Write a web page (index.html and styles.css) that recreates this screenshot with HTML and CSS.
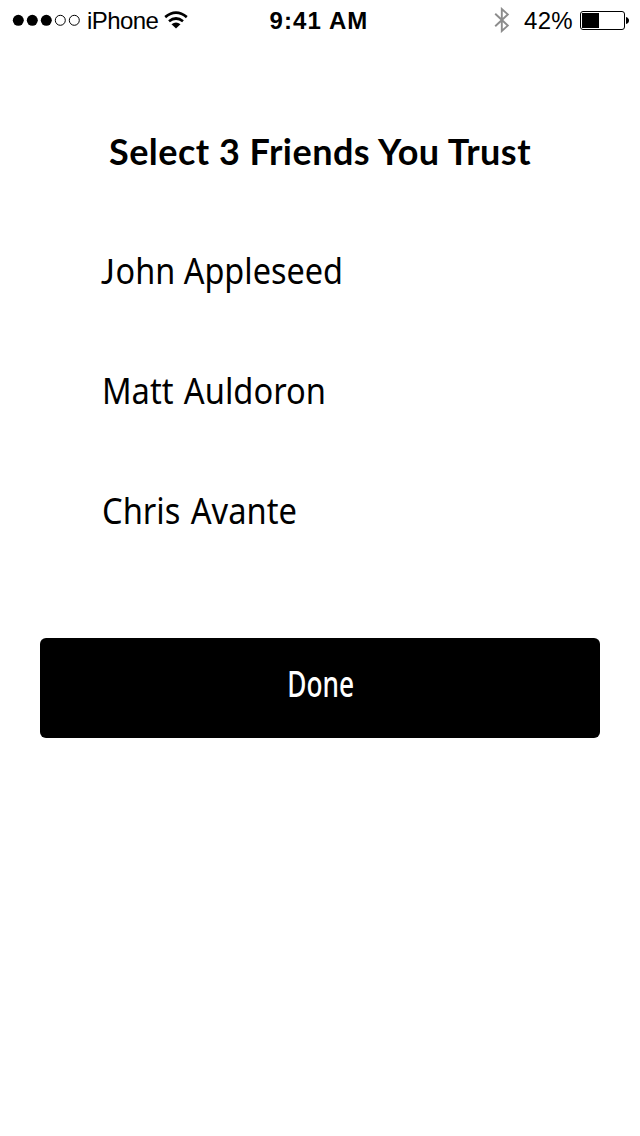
FILE: index.html
```html
<!DOCTYPE html>
<html lang="en">
<head>
<meta charset="utf-8">
<title>Select Friends</title>
<link rel="stylesheet" href="styles.css">
</head>
<body>
<header class="status">
  <div class="status-left">
    <svg class="signal" width="68" height="12" viewBox="0 0 68 12"><circle cx="6.3" cy="6.3" r="5.5"/><circle cx="20.3" cy="6.3" r="5.5"/><circle cx="34.3" cy="6.3" r="5.5"/><g fill="none" stroke="#000"><circle cx="48.3" cy="6.3" r="5"/><circle cx="62.3" cy="6.3" r="5"/></g></svg>
    <span class="carrier">iPhone</span>
    <svg class="wifi" width="24" height="18" viewBox="0 0 24 18"><g fill="none" stroke="#000" stroke-width="2.7"><path d="M1.2 6.1Q12 -2.7 22.8 6.1"/><path d="M5 10.3Q12 4.7 19 10.3"/></g><path d="M7.5 13.2Q12 9.6 16.5 13.2L12 17.6Z"/></svg>
  </div>
  <span class="time">9:41 AM</span>
  <div class="status-right">
    <svg class="bluetooth" width="16" height="26" viewBox="0 0 16 26"><path d="M1.2 6.7L13.8 18.6L7.8 24V2L13.8 7.4L1.2 19.3" fill="none" stroke="#8c8c8c" stroke-width="1.9"/></svg>
    <span class="percent">42%</span>
    <svg class="battery" width="49" height="20" viewBox="0 0 49 20"><rect x=".5" y=".5" width="44" height="18" rx="2.5" fill="none" stroke="#000"/><rect x="2" y="2" width="17" height="15"/><path d="M46 6Q49 7 49 9.5T46 13Z"/></svg>
  </div>
</header>
<main class="content">
  <h1 class="title">Select 3 Friends You Trust</h1>
  <ul class="friends">
    <li class="friend"><span class="name name-long"><span class="initial">J</span>ohn Appleseed</span></li>
    <li class="friend"><span class="name">Matt Auldoron</span></li>
    <li class="friend"><span class="name">Chris Avante</span></li>
  </ul>
  <button class="done"><span class="done-text">Done</span></button>
</main>
</body>
</html>
```

FILE: styles.css
```css
* { box-sizing: border-box; }
body { margin: 0; background: #fff; color: #000; font-family: "Noto Sans", sans-serif; }
svg { display: block; flex: none; }
.status { height: 40px; display: grid; grid-template-columns: 1fr auto 1fr; align-items: center; font: 24px/38px "Liberation Sans", Arial, sans-serif; white-space: nowrap; }
.status-left { display: flex; align-items: center; padding-left: 12px; }
.carrier { flex: none; padding-top: 2px; margin-left: 7px; letter-spacing: -.6px; width: 72px; }
.wifi { margin-left: 5px; }
.time { padding-top: 2px; font-weight: bold; letter-spacing: 1.1px; position: relative; left: -1px; }
.status-right { display: flex; align-items: center; justify-content: flex-end; padding-right: 11px; }
.percent { padding-top: 2px; margin: 0 7px 0 14px; letter-spacing: .3px; }
.battery { margin-top: 2px; }
.content { padding: 81px 40px 0; }
.title { margin: 0; height: 60px; font: bold 36px/60px Lato, sans-serif; letter-spacing: .48px; text-align: center; white-space: nowrap; }
.friends { list-style: none; margin: 29px 0 0; padding: 0 0 0 62px; }
.friend { height: 120px; font-size: 35.5px; line-height: 120px; white-space: nowrap; }
.name { display: inline-block; transform: scaleX(.92); transform-origin: left; word-spacing: 2px; }
.name-long { transform: translateX(-1px) scaleX(.913); word-spacing: 0; }
.initial { font-family: Lato, sans-serif; letter-spacing: 1px; }
.done { display: flex; align-items: center; justify-content: center; width: 560px; height: 100px; margin-top: 68px; padding: 0 0 10px; border: 0; border-radius: 6px; background: #000; color: #fff; font: 550 35.5px/60px "Noto Sans", sans-serif; }
.done-text { transform: translateX(.5px) scaleX(.74); }
```
